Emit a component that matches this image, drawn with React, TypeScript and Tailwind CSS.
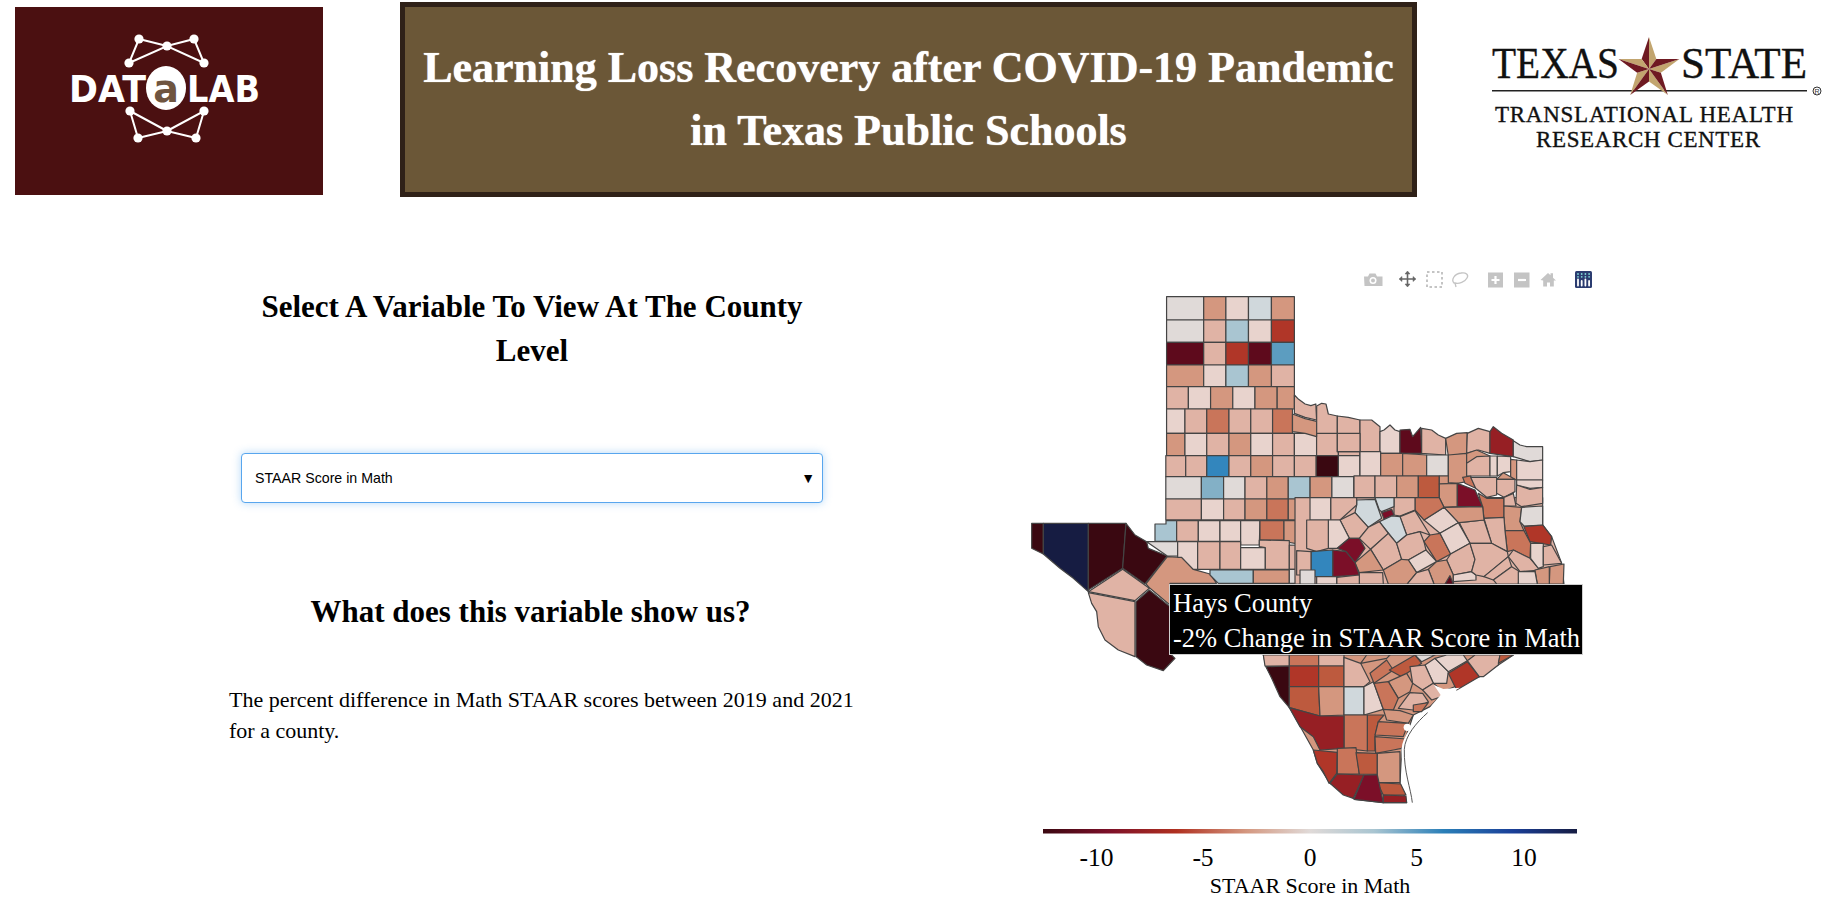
const GREY = "#e0dad8";
const L1 = "#e8d3cd";
const L2 = "#e0b3a5";
const L3 = "#d4977f";
const L4 = "#c9755a";
const L5 = "#bd5a3e";
const L6 = "#b03628";
const L7 = "#961f24";
const L8 = "#7b0f28";
const L9 = "#5e0a1c";
const DD = "#3a0811";
const NAVY = "#161c42";
const GB = "#d0d8dc";
const LB = "#a9c5d1";
const B1 = "#83b0c6";
const B2 = "#5c9dc0";
const B3 = "#3386bd";

type Row = [number, number, number[], string[]];

// panhandle rows, in zoom coordinates (x / 2.613, y / 3)
const rows: Row[] = [
  [110, 180, [383, 480, 538, 597, 657, 717], [GREY, L3, L1, GB, L3]],
  [180, 247, [383, 480, 538, 597, 657, 717], [GREY, L2, LB, L1, L6]],
  [247, 315, [383, 480, 538, 597, 657, 717], [L9, L2, L6, L9, B2]],
  [315, 380, [383, 480, 538, 597, 657, 717], [L3, L1, LB, L3, L2]],
  [380, 447, [383, 440, 498, 556, 614, 672, 717], [L2, L1, L3, L1, L3, L3]],
  [447, 520, [383, 431, 488, 546, 603, 660, 712], [L1, L2, L4, L2, L2, L4]],
  [520, 587, [383, 431, 488, 546, 603, 660, 717, 775, 832, 888], [L3, L1, L2, L3, L1, L2, L1, L2, L2]],
  [587, 650, [381, 433, 488, 546, 603, 660, 717, 774, 832, 888], [L2, L2, B3, L2, L3, L2, L2, DD, L1]],
  [650, 717, [381, 474, 532, 588, 645, 701, 758, 815, 872], [GREY, B1, GREY, L2, L3, LB, L3, GREY]],
  [717, 780, [381, 474, 532, 588, 645, 701, 758], [L2, L1, L2, L3, L4, L3]],
];

const topLeft: [string, string][] = rows.flatMap(([y0, y1, xs, cs]) =>
  cs.map((c, i): [string, string] => [c, `${xs[i]},${y0} ${xs[i + 1]},${y0} ${xs[i + 1]},${y1} ${xs[i]},${y1}`]),
);

const redRiver: [string, string][] = [
  [L2, "717,405 728,418 745,432 760,437 773,432 775,480 745,472 717,460"],
  [L3, "712,462 745,476 775,484 775,530 745,520 712,515"],
];

const west: [string, string][] = [
  [DD, "5,130 40,130 40,222 5,205"],
  [NAVY, "40,130 175,130 175,335 130,295 90,265 40,222"],
  [DD, "175,130 288,130 278,265 175,330"],
  [DD, "288,130 315,165 350,185 355,205 412,228 345,312 278,265"],
  [L2, "175,335 278,268 358,325 315,362"],
  [L2, "175,338 315,365 315,530 265,510 225,480 205,440 200,395 185,370"],
  [DD, "318,365 358,330 420,380 420,520 435,535 400,572 350,555 318,530"],
  [L3, "348,312 412,230 455,232 490,268 540,282 560,310 420,310 420,375 360,325"],
  [LB, "375,132 408,132 408,122 440,122 440,184 375,184"],
  [L2, "440,122 505,122 505,184 440,184"],
  [L1, "505,122 570,122 570,184 505,184"],
  [L1, "570,122 632,122 632,184 570,184"],
  [L1, "632,122 690,122 688,195 632,195"],
  [L4, "690,122 762,122 762,180 690,180"],
  [L3, "762,122 825,122 825,195 762,185"],
  [GREY, "350,185 443,185 443,228 412,228"],
  [L1, "443,185 503,185 503,268 490,268 455,232 443,232"],
  [L2, "503,185 570,185 570,268 503,268"],
  [L2, "570,185 632,185 632,268 570,268"],
  [L1, "632,203 706,203 706,268 632,268"],
  [L2, "688,180 778,182 778,268 706,268 706,203 688,200"],
  [L2, "778,195 840,197 840,268 778,268"],
  [LB, "540,270 670,270 670,310 565,310 540,285"],
  [L3, "670,270 778,270 778,310 670,310"],
  [GREY, "778,268 855,268 855,310 778,310"],
];

const east: [string, string][] = [
  [L2, "-15,293 728,293 728,375 755,410 785,490 792,552 -15,552"],
  [L2, "50,18 65,10 78,12 85,42 112,48 112,100 50,100"],
  [L2, "112,48 145,52 180,60 180,155 112,155"],
  [L2, "180,60 215,60 240,80 240,155 180,155"],
  [L1, "240,95 252,90 270,75 285,90 300,95 300,160 240,160"],
  [L9, "300,90 330,88 338,110 362,82 365,160 300,160"],
  [L2, "365,85 395,90 415,105 437,115 437,165 365,160"],
  [L3, "437,115 470,100 502,98 500,160 445,168"],
  [L2, "502,100 535,85 570,95 570,160 535,150 500,160"],
  [L7, "570,95 580,80 605,100 640,120 640,170 570,160"],
  [GREY, "640,122 660,135 680,140 728,140 728,180 690,185 640,170"],
  [L2, "112,100 180,100 180,155 112,155"],
  [L1, "180,155 242,155 242,228 162,228 180,228"],
  [L3, "242,160 308,160 308,228 242,228"],
  [L3, "308,160 380,165 380,228 308,228"],
  [GREY, "380,165 445,165 445,228 380,228"],
  [L3, "445,165 500,160 500,245 472,250 445,248"],
  [L3, "500,160 530,150 570,168 500,190"],
  [L2, "500,190 530,170 570,168 570,228 500,228"],
  [L1, "570,168 592,168 592,228 570,228"],
  [L1, "592,168 632,170 632,215 610,218 592,228"],
  [L3, "632,178 650,180 650,240 632,235"],
  [L1, "650,180 690,185 728,180 728,240 650,240"],
  [L2, "162,228 225,228 225,293 162,293"],
  [L2, "225,228 290,228 290,293 225,293"],
  [L3, "290,228 355,228 355,293 290,293"],
  [L5, "355,228 418,228 418,293 355,293"],
  [L3, "418,228 445,228 445,250 418,252"],
  [L3, "418,252 472,250 472,320 432,322 418,293"],
  [L8, "472,250 525,270 548,320 472,320"],
  [L4, "488,232 512,228 527,265 495,250"],
  [L2, "512,232 590,232 590,285 560,292 527,265"],
  [L3, "590,238 610,218 645,238"],
  [L2, "590,238 645,238 645,275 612,292 590,280"],
  [L1, "650,240 728,240 728,262 690,265 650,255"],
  [L2, "650,255 690,268 728,262 728,310 665,320 648,310"],
  [L4, "535,280 560,295 612,295 612,352 552,355 548,320"],
  [L2, "612,292 640,280 648,318 612,318"],
  [L3, "612,318 665,322 660,365 672,392 615,392 612,352"],
  [GREY, "665,322 728,318 728,375 672,378 660,365"],
  [L6, "672,380 728,375 755,410 752,435 690,425"],
  [L4, "615,392 672,392 692,430 690,475 640,450 622,455"],
  [L2, "552,355 612,352 615,392 622,455 590,438 575,430"],
  [L2, "478,368 552,360 575,430 510,430"],
  [L3, "432,322 548,320 552,360 478,368 475,368"],
  [L1, "372,360 432,322 475,368 420,400"],
  [L4, "350,293 418,293 432,322 372,360 345,330 345,293"],
  [L2, "282,293 345,293 345,330 300,348 282,345"],
  [L2, "300,350 345,332 390,405 360,395 320,405"],
  [GB, "225,293 282,293 282,320 245,335 238,330"],
  [L8, "245,338 275,328 282,345 252,357"],
  [GB, "170,300 225,298 245,355 205,382 165,338 170,315"],
  [GB, "238,365 275,348 300,350 320,405 290,430"],
  [L2, "92,293 170,293 170,315 120,360 92,360"],
  [L1, "30,293 92,293 92,360 30,360"],
  [L2, "120,360 165,338 205,382 178,415 148,415"],
  [L1, "85,360 120,360 148,415 112,445 85,445"],
  [L2, "20,360 85,360 85,445 50,455 20,445"],
  [L2, "205,382 238,365 265,400 212,448 178,415"],
  [L2, "212,448 265,400 290,430 305,478 250,510"],
  [L2, "290,430 320,405 360,395 372,425 378,450 325,480 305,478"],
  [L4, "390,405 420,400 452,462 410,485 372,425"],
  [L1, "325,480 378,450 410,485 350,518"],
  [L1, "420,400 475,368 510,430 452,462"],
  [L2, "452,462 510,430 525,478 515,515 460,525 440,480"],
  [L3, "250,510 305,478 325,480 350,518 322,552 265,552"],
  [L3, "165,488 212,448 250,510 178,518"],
  [L8, "112,445 148,415 178,415 195,445 165,488 138,455"],
  [L8, "98,450 138,455 165,488 178,525 98,530"],
  [B3, "33,455 98,450 98,530 33,530"],
  [L2, "-10,452 33,455 33,525 -10,525"],
  [L3, "385,508 410,485 440,480 460,525 460,552 402,552"],
  [L2, "322,552 350,518 385,508 402,552"],
  [L1, "460,525 515,515 528,525 528,540 460,545"],
  [L9, "435,552 450,527 460,552"],
  [L2, "510,430 575,430 590,438 622,455 625,470 552,530 528,525 515,515 525,478"],
  [L2, "552,530 625,470 635,500 580,540"],
  [L2, "580,540 635,500 660,515 655,552 590,552"],
  [L2, "625,470 640,450 690,475 720,510 660,515"],
  [L1, "692,430 730,430 730,500 715,505 692,475"],
  [L2, "730,440 755,435 785,490 730,495"],
  [L3, "750,500 792,492 790,552 748,552"],
  [L3, "705,510 748,500 748,552 712,552"],
  [L1, "655,515 705,515 712,552 655,552"],
  [L2, "178,518 248,518 250,552 178,552"],
  [L2, "110,532 178,525 178,552 110,552"],
  [L1, "50,530 110,530 110,552 50,552"],
  [GREY, "0,510 45,510 45,552 0,552"],
];

const south: [string, string][] = [
  [L3, "100,45 850,45 805,75 748,110 650,150 600,200 550,225 515,330 510,430 530,488 460,488 375,478 300,430 262,370 250,330 180,205 108,80"],
  [L2, "100,45 178,45 178,78 105,78"],
  [L4, "178,45 266,45 266,78 178,78"],
  [L2, "266,45 342,45 342,78 266,78"],
  [DD, "108,80 178,78 178,203 150,170 125,115"],
  [L6, "178,78 266,78 266,140 178,140"],
  [L5, "266,78 342,78 342,140 266,140"],
  [L5, "178,140 266,140 270,228 178,203"],
  [L3, "266,140 342,140 342,225 270,228"],
  [GB, "342,140 402,140 402,225 342,225"],
  [L2, "342,52 392,70 420,125 402,140 342,140"],
  [L1, "402,140 430,125 460,208 402,225"],
  [L3, "392,70 470,55 480,45 410,45"],
  [L4, "420,100 470,60 490,90 432,130"],
  [L5, "478,90 555,45 575,70 515,110"],
  [GREY, "555,45 615,45 575,65"],
  [L1, "585,75 615,55 655,95 650,130 610,130"],
  [L1, "615,55 650,45 700,45 712,62 655,95"],
  [L6, "655,100 712,65 748,110 680,150"],
  [L2, "712,62 735,45 810,45 805,75 760,110 748,110"],
  [L5, "810,45 850,45 805,70"],
  [L2, "540,80 585,75 610,130 578,150 548,130"],
  [L3, "475,125 530,100 548,130 540,155 505,175"],
  [L2, "578,150 610,130 640,155 635,170 605,180"],
  [L4, "432,130 475,125 505,175 490,210 460,208"],
  [L2, "505,205 540,158 578,160 595,185 550,210"],
  [L4, "550,195 595,188 575,215 550,215"],
  [L3, "460,208 510,212 550,225 535,250 470,240"],
  [L5, "412,225 462,225 445,245 435,290 435,333 412,333"],
  [L4, "342,225 412,225 412,333 342,325"],
  [L7, "178,203 270,228 342,228 342,325 270,330 250,290 210,260"],
  [L4, "445,245 535,250 520,290 435,285"],
  [L4, "435,290 530,297 515,325 490,330 437,340"],
  [L6, "250,330 322,337 320,400 297,430 280,395 262,370"],
  [L4, "322,325 378,323 388,402 322,402"],
  [L5, "378,338 442,340 442,403 388,402"],
  [L3, "442,340 510,335 510,428 442,428"],
  [L5, "442,428 512,432 528,465 460,465"],
  [L7, "300,430 322,402 402,405 370,475 340,465"],
  [L8, "402,405 442,405 460,488 372,478"],
  [L7, "460,465 528,468 530,488 460,488"],
];

function Counties({ items, transform }: { items: [string, string][]; transform: string }) {
  return (
    <g transform={transform}>
      {items.map(([fill, points], i) => (
        <polygon
          key={i}
          points={points}
          fill={fill}
          stroke="#444"
          strokeWidth={1.2}
          strokeLinejoin="round"
          vectorEffect="non-scaling-stroke"
        />
      ))}
    </g>
  );
}

function Star() {
  const cx = 1649;
  const cy = 69;
  const R = 32;
  const r = 12.5;
  const at = (rad: number, deg: number) => {
    const a = ((deg - 90) * Math.PI) / 180;
    return `${cx + rad * Math.cos(a)},${cy + rad * Math.sin(a)}`;
  };
  return (
    <g>
      {[0, 72, 144, 216, 288].map((d) => (
        <g key={d}>
          <polygon points={`${cx},${cy} ${at(R, d)} ${at(r, d + 36)}`} fill="#c2a56f" />
          <polygon points={`${cx},${cy} ${at(R, d)} ${at(r, d - 36)}`} fill="#6f1a22" />
        </g>
      ))}
    </g>
  );
}

function DatalabLogo() {
  const top = [[139, 39], [167, 46], [194, 39], [129, 63], [204, 63]];
  const bottom = [[130, 111], [204, 111], [167, 131], [138, 138], [196, 138]];
  return (
    <svg viewBox="15 7 308 188" className="w-[308px] h-[188px] mt-[7px] ml-[15px] shrink-0 bg-[#4b1011]">
      <g fill="none" stroke="#fff" strokeWidth="2">
        <polyline points="139,39 167,46 194,39 204,63 167,46 129,63 139,39" />
        <polyline points="130,111 167,131 204,111 196,138 167,131 138,138 130,111" />
      </g>
      {[...top, ...bottom].map(([x, y]) => (
        <circle key={`${x}-${y}`} cx={x} cy={y} r={4.6} fill="#fff" />
      ))}
      <g fill="#fff" fontFamily="'DejaVu Sans', sans-serif" fontWeight="700" fontSize="38">
        <text x="69" y="102" textLength="77" lengthAdjust="spacingAndGlyphs">DAT</text>
        <text x="187" y="102" textLength="73" lengthAdjust="spacingAndGlyphs">LAB</text>
      </g>
      <ellipse cx="166" cy="88" rx="20" ry="22" fill="#fff" />
      <text x="166" y="102" textAnchor="middle" fill="#6f5540" fontFamily="'DejaVu Sans', sans-serif" fontWeight="700" fontSize="38">a</text>
    </svg>
  );
}

function TexasStateLogo() {
  return (
    <svg viewBox="1440 0 400 210" className="w-[400px] h-[210px] ml-[23px] shrink-0">
      <g fill="#111" fontFamily="'Liberation Serif', serif" stroke="#111" strokeWidth="0.35">
        <text x="1492" y="78" fontSize="45" textLength="127" lengthAdjust="spacingAndGlyphs">TEXAS</text>
        <text x="1681" y="78" fontSize="45" textLength="126" lengthAdjust="spacingAndGlyphs">STATE</text>
        <text x="1495" y="122" fontSize="23" textLength="298" lengthAdjust="spacing">TRANSLATIONAL HEALTH</text>
        <text x="1536" y="147" fontSize="23" textLength="224" lengthAdjust="spacing">RESEARCH CENTER</text>
      </g>
      <rect x="1492" y="90" width="315" height="1.5" fill="#222" />
      <Star />
      <circle cx="1817" cy="91" r="4" fill="none" stroke="#333" />
      <text x="1817" y="94" fontSize="7" textAnchor="middle" fill="#333" fontFamily="'Liberation Sans', sans-serif">R</text>
    </svg>
  );
}

function Toolbar() {
  return (
    <g>
      {/* camera */}
      <path d="M1364 276.5h4l1.5-3h6l1.500 3h5.500v9.500h-18z" fill="#c4c4c4" />
      <circle cx="1373" cy="280.500" r="3.500" fill="#fff" />
      <circle cx="1373" cy="280.500" r="2" fill="#c4c4c4" />
      {/* pan */}
      <g stroke="#666" strokeWidth="1.600" fill="#666">
        <path d="M1407.500 272v14M1400 279h15" fill="none" />
        <path d="M1407.500 271l-2.500 3h5zM1407.500 287l-2.500-3h5zM1399 279l3-2.500v5zM1416 279l-3-2.500v5z" strokeWidth="0.500" />
      </g>
      {/* box select */}
      <rect x="1427" y="272" width="15" height="15" fill="none" stroke="#c4c4c4" strokeWidth="2" strokeDasharray="2.500 2.500" />
      {/* lasso */}
      <path d="M1454 283c-3-3 0-9 7-10 5-1 8 2 6 5-2 4-8 6-12 5zM1455 283l1 4" fill="none" stroke="#c4c4c4" strokeWidth="1.300" />
      {/* zoom in and out */}
      <rect x="1488" y="272.500" width="15" height="15" fill="#c4c4c4" />
      <path d="M1495.500 276v8M1491.500 280h8" stroke="#fff" strokeWidth="2.200" />
      <rect x="1514" y="272.500" width="15.500" height="15" fill="#c4c4c4" />
      <path d="M1518 280h8" stroke="#fff" strokeWidth="2.200" />
      {/* home */}
      <path d="M1540.500 280l7.500-7 2.500 2.300v-2h2.500v4.500l3 2.700h-2.200v6h-3.800v-4h-3v4h-3.800v-6z" fill="#c4c4c4" />
      {/* plotly logo */}
      <rect x="1575" y="271" width="17" height="17" rx="1.500" fill="#2b3c70" />
      {[0, 1, 2, 3].map((c) => (
        <g key={c}>
          <circle cx={1578 + c * 3.700} cy={274} r="0.900" fill="#7fd6d6" />
          <circle cx={1578 + c * 3.700} cy={276.800} r="0.900" fill="#7fd6d6" />
        </g>
      ))}
      <path d="M1578 279.500v6M1581.700 281v4.500M1585.400 279.500v6M1589.100 281v4.500" stroke="#fff" strokeWidth="1.800" strokeLinecap="round" />
    </g>
  );
}

function TexasMap() {
  return (
    <div className="relative w-[600px] h-[652px] ml-[161px] shrink-0">
      <svg viewBox="1020 260 600 652" className="w-[600px] h-[652px] block">
        <defs>
          <linearGradient id="rdbu">
            <stop offset="0" stopColor="#3a0811" />
            <stop offset="0.12" stopColor="#7b0f28" />
            <stop offset="0.25" stopColor="#b03020" />
            <stop offset="0.38" stopColor="#d4977f" />
            <stop offset="0.5" stopColor="#e0dad8" />
            <stop offset="0.62" stopColor="#a9c5d1" />
            <stop offset="0.75" stopColor="#2a7fb8" />
            <stop offset="0.88" stopColor="#1a3f98" />
            <stop offset="1" stopColor="#161c42" />
          </linearGradient>
        </defs>
        <Toolbar />
        <Counties items={topLeft} transform="translate(1020 260) scale(0.3827 0.3333)" />
        <Counties items={redRiver} transform="translate(1020 260) scale(0.3827 0.3333)" />
        <Counties items={west} transform="translate(1030 480) scale(0.3333)" />
        <Counties items={east} transform="translate(1300 400) scale(0.3333)" />
        <Counties items={south} transform="translate(1230 640) scale(0.3333)" />
        {/* bays and barrier islands */}
        <g transform="translate(1230 640) scale(0.3333)">
          <path d="M612 135l28 12 50-4-42 24-14 18-36 22 8-12 26-30z" fill="#fff" />
          <circle cx="532" cy="262" r="11" fill="#fff" />
          <path d="M547 488c-4-40-30-95-28-160 2-40 40-80 72-112" fill="none" stroke="#fff" strokeWidth="3" vectorEffect="non-scaling-stroke" />
          <path d="M547 488c-4-40-26-95-24-160 2-40 36-80 70-110" fill="none" stroke="#555" strokeWidth="1" vectorEffect="non-scaling-stroke" />
        </g>
        <rect x="1043" y="829" width="534" height="4.500" fill="url(#rdbu)" />
        <g fontFamily="'Liberation Serif', serif" fill="#000" textAnchor="middle">
          {[
            ["-10", 1096.5],
            ["-5", 1203],
            ["0", 1310],
            ["5", 1416.5],
            ["10", 1524],
          ].map(([t, x]) => (
            <text key={t} x={x} y="866" fontSize="25.500">{t}</text>
          ))}
          <text x="1310" y="893" fontSize="22">STAAR Score in Math</text>
        </g>
      </svg>
      {/* hover tooltip */}
      <div className="absolute left-[149px] top-[324px] w-[414px] h-[71px] bg-black border border-[#cfcfcf] pl-[3px] pt-[1px] text-white text-[26.5px] leading-[35px] whitespace-nowrap">
        <div>Hays County</div>
        <div>-2% Change in STAAR Score in Math</div>
      </div>
    </div>
  );
}

export default function App() {
  return (
    <div className="w-[1840px] h-[912px] overflow-hidden bg-white font-['Liberation_Serif',serif] text-black">
      <header className="flex items-start h-[210px]">
        <DatalabLogo />
        <div className="w-[1017px] h-[195px] ml-[77px] mt-[2px] shrink-0 bg-[#6b5737] border-[5px] border-[#2f2118] flex items-center justify-center">
          <h1 className="text-white font-bold text-[44px] leading-[63px] text-center w-full -mt-[2px] [text-shadow:0_0_1px_#fff]">
            Learning Loss Recovery after COVID-19 Pandemic
            <br />
            in Texas Public Schools
          </h1>
        </div>
        <TexasStateLogo />
      </header>
      <main className="flex items-start pl-[229px] pt-[50px]">
        <section className="w-[630px] shrink-0">
          <h2 className="w-[606px] mt-[25px] text-center font-bold text-[31px] leading-[44px]">
            Select A Variable To View At The County Level
          </h2>
          <div className="flex items-center justify-between w-[582px] h-[50px] mt-[80px] ml-[12px] pl-[13px] pr-[7px] bg-white border border-[#58a6ee] rounded-[4px] shadow-[0_0_8px_rgba(88,166,238,0.45)] font-['Liberation_Sans',sans-serif] text-[14.2px] text-black">
            <span className="pt-[2px]">STAAR Score in Math</span>
            <span className="text-[14px]">▼</span>
          </div>
          <h2 className="w-[603px] mt-[87px] text-center font-bold text-[31px] leading-[44px]">
            What does this variable show us?
          </h2>
          <p className="mt-[50px] text-[22px] leading-[31px]">
            The percent difference in Math STAAR scores between 2019 and 2021 for a county.
          </p>
        </section>
        <TexasMap />
      </main>
    </div>
  );
}
